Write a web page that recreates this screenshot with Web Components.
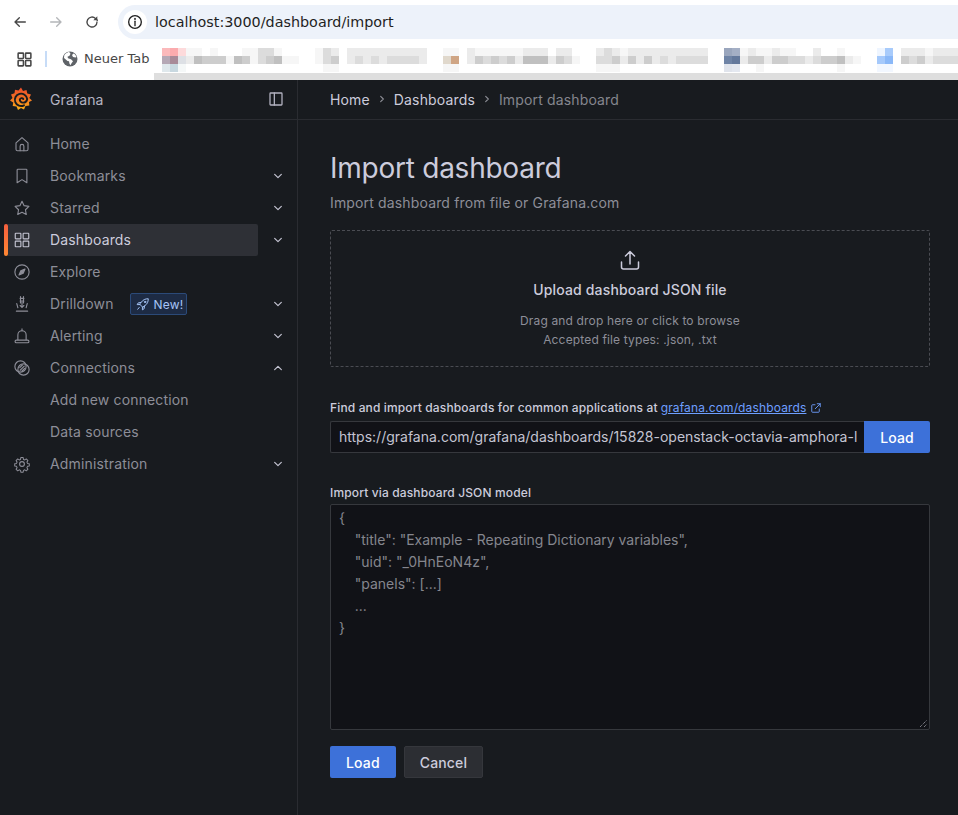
<!DOCTYPE html>
<html>
<head>
<meta charset="utf-8">
<title>Import dashboard</title>
<style>
  html, body { margin: 0; height: 100%; background: #181b1f; overflow: hidden; }
  body { width: 958px; height: 815px; display: flex; flex-direction: column; font-family: 'Inter', 'Liberation Sans', sans-serif; }
</style>
</head>
<body>
<browser-toolbar url="localhost:3000/dashboard/import"></browser-toolbar>
<bookmark-bar></bookmark-bar>
<grafana-app></grafana-app>

<script>
const ICONS = {
  home: '<path d="M4 10.5 12 3.5l8 7V19a2 2 0 0 1-2 2H6a2 2 0 0 1-2-2z"/><path d="M9.5 21v-6a2.5 2.5 0 0 1 5 0v6"/>',
  bookmark: '<path d="M6.5 3h11a1 1 0 0 1 1 1v17L12 16.8 5.5 21V4a1 1 0 0 1 1-1z"/>',
  star: '<path d="m12 3 2.8 5.9 6.4.9-4.6 4.5 1.1 6.4-5.7-3-5.7 3 1.1-6.4-4.6-4.5 6.4-.9z"/>',
  apps: '<rect x="3" y="3" width="7.5" height="7.5" rx=".8"/><rect x="13.5" y="3" width="7.5" height="7.5" rx=".8"/><rect x="3" y="13.5" width="7.5" height="7.5" rx=".8"/><rect x="13.5" y="13.5" width="7.5" height="7.5" rx=".8"/>',
  compass: '<circle cx="12" cy="12" r="9.5"/><path d="m16 8-2.4 5.6L8 16l2.4-5.6z" fill="currentColor"/>',
  drilldown: '<path d="M9.5 4.5h5M9.5 8h5M10 2v8.500M14 2v8.500"/><path d="M12 9v7.500M9.500 14l2.500 2.500 2.500-2.500"/><path d="M5 11.500 6.500 17M19 11.500 17.500 17M4.500 21.500h15"/>',
  bell: '<path d="M6.500 17v-6.500a5.500 5.500 0 0 1 11 0V17"/><path d="M4.500 17.500h15a.5.5 0 0 1 0 3.500h-15a.5.5 0 0 1 0-3.500zM12 2.500V5"/>',
  link: '<circle cx="10" cy="10" r="7.5"/><circle cx="14" cy="14" r="7.5"/><path d="m9.5 15 5.5-5.5M9 11.5l3.5-3.5M12 16l3.5-3.5"/>',
  cog: '<circle cx="12" cy="12" r="3.2"/><path d="M10.3 2.5h3.4l.5 2.7 1.9.8 2.3-1.5 2.4 2.4-1.5 2.3.8 1.9 2.7.5v3.4l-2.7.5-.8 1.9 1.5 2.3-2.4 2.4-2.3-1.5-1.9.8-.5 2.7h-3.4l-.5-2.7-1.9-.8-2.3 1.5-2.4-2.4 1.5-2.3-.8-1.9-2.7-.5v-3.4l2.7-.5.8-1.9-1.5-2.3 2.4-2.4 2.3 1.5 1.9-.8z" transform="translate(12 12) scale(.9) translate(-12 -12)"/>',
  down: '<path d="m7 9.5 5 5 5-5"/>',
  up: '<path d="m7 14.5 5-5 5 5"/>',
  right: '<path d="m10 8 4 4-4 4"/>',
  dock: '<rect x="3" y="3" width="18" height="18" rx="1"/><path d="M9.5 3v18"/>',
  upload: '<path d="M3.5 14v5a2 2 0 0 0 2 2h13a2 2 0 0 0 2-2v-5"/><path d="M12 16V3.5M7.5 8 12 3.5 16.5 8"/>',
  external: '<path d="M18.5 14v5a1.5 1.5 0 0 1-1.5 1.5H5A1.5 1.5 0 0 1 3.500 19V7A1.500 1.500 0 0 1 5 5.500h5"/><path d="M14.500 3.500h6v6M20.500 3.500 10.500 13.500"/>',
  rocket: '<path d="M9 9C12 4.500 16 3 21 3c0 5-1.500 9-6 12l-3.500 2.500-5-5z"/><circle cx="15.500" cy="8.500" r="1.300"/><path d="M8.500 9.500 4 10l-2 3h4.500M14.500 15.500 14 20l-3 2v-4.500M5.500 18 3 21"/>',
  back: '<path d="M20 12H5M11 5.500 4.500 12l6.500 6.500"/>',
  forward: '<path d="M4 12h15M13 5.500l6.500 6.500-6.500 6.500"/>',
  reload: '<path d="M19.500 12a7.500 7.500 0 1 1-2.300-5.400L20 9.300"/><path d="M20 3.500v6h-6z" fill="currentColor" stroke="none"/>',
  info: '<circle cx="12" cy="12" r="9.500"/><path d="M12 11v6.500"/><path d="M12 6.500v2"/>',
};

class GfIcon extends HTMLElement {
  connectedCallback() {
    const size = this.getAttribute('size') || 16;
    const stroke = this.getAttribute('stroke') || 1.7;
    this.attachShadow({ mode: 'open' }).innerHTML = `
      <style>:host { display: inline-flex; flex: none; width: ${size}px; height: ${size}px; } svg { display: block; }</style>
      <svg width="${size}" height="${size}" viewBox="0 0 24 24" fill="none" stroke="currentColor" stroke-width="${stroke}" stroke-linecap="round" stroke-linejoin="round">${ICONS[this.getAttribute('name')] || ''}</svg>`;
  }
}
customElements.define('gf-icon', GfIcon);

class BrowserToolbar extends HTMLElement {
  connectedCallback() {
    this.attachShadow({ mode: 'open' }).innerHTML = `
      <style>
        :host { display: flex; align-items: center; height: 44px; flex: none; background: #fff; box-sizing: border-box; padding: 0 0 0 12px; color: #474747; font-family: 'DejaVu Sans', sans-serif; }
        gf-icon.back { margin-right: 20px; }
        gf-icon.fwd { margin-right: 20px; color: #b4b6b9; }
        .pill { flex: 1; height: 34px; margin-left: 18px; background: #edf2fa; border-radius: 17px 0 0 17px; display: flex; align-items: center; padding-left: 5px; }
        .badge { width: 24px; height: 24px; border-radius: 50%; background: #fff; display: flex; align-items: center; justify-content: center; color: #1f1f1f; }
        .url { margin-left: 8px; font-size: 14.35px; color: #1f1f1f; white-space: nowrap; }
      </style>
      <gf-icon class="back" name="back" size="16" stroke="2"></gf-icon>
      <gf-icon class="fwd" name="forward" size="16" stroke="2"></gf-icon>
      <gf-icon name="reload" size="16" stroke="2"></gf-icon>
      <div class="pill">
        <div class="badge"><gf-icon name="info" size="16" stroke="2"></gf-icon></div>
        <div class="url">${this.getAttribute('url')}</div>
      </div>`;
  }
}
customElements.define('browser-toolbar', BrowserToolbar);

// pixelated bookmark titles: one char per 8px cell, ten cells per chunk
const MOSAIC_COLORS = {
  '.': '#fff', f: '#f6f6f6', e: '#ebebeb', d: '#dcdcdc', c: '#cdcdcd', b: '#c0c0c0',
  A: '#fbb9bb', B: '#fbabae', C: '#fddadb', D: '#b5a8b5', E: '#a88a98', F: '#dde0e5',
  G: '#dfe8ec', H: '#c8d8e0', I: '#f5f8f8', J: '#e0d8cc', K: '#cfa584', L: '#9aa6bd',
  M: '#a4afc5', N: '#6f84a6', O: '#64799c', P: '#e0e4ec', Q: '#e4e8f0', R: '#eef5ff',
  S: '#a8cbfb', T: '#a5c9fb', U: '#8ab8f8', V: '#f2f7ff',
};
const MOSAIC_ROWS = [
  ['ABCff.f...', 'ffddf....f', 'de.eeeeeee', 'eee..ff.ef', 'fffffeee.e', 'e...edefee', 'eeeeeeee..', 'LMfeffeff.', '.e..f....R', 'S.eeefeeee'],
  ['DEFebcccfb', 'cfdcbff..f', 'dc.edededd', 'dde..JK.ec', 'dcdcebbbec', 'df..ddcece', 'cededddd..', 'NOecceccdd', 'edccbef..T', 'U.cdcedddd'],
  ['GHI.......', '..........', 'ff........', '.....ff...', '..........', '....fff...', '..........', 'PQ..f.....', '....f....V', 'V.........'],
].map(chunks => chunks.join(''));

class BlurMosaic extends HTMLElement {
  connectedCallback() {
    const cells = MOSAIC_ROWS.map(row => [...row].map(ch => `<i style="background:${MOSAIC_COLORS[ch]}"></i>`).join('')).join('');
    this.attachShadow({ mode: 'open' }).innerHTML = `
      <style>
        :host { display: grid; grid-template-columns: repeat(100, 8.04px); grid-auto-rows: 8px; }
        i { display: block; }
      </style>${cells}`;
  }
}
customElements.define('blur-mosaic', BlurMosaic);

class BookmarkBar extends HTMLElement {
  connectedCallback() {
    this.attachShadow({ mode: 'open' }).innerHTML = `
      <style>
        :host { display: flex; height: 36px; flex: none; background: #fff; color: #474747; font-family: 'DejaVu Sans', sans-serif; overflow: hidden; }
        .apps { margin: 7px 0 0 16px; }
        .sep { width: 2px; height: 16px; margin: 7px 0 0 12px; background: #c7dcf7; }
        .globe { margin: 7px 0 0 15px; color: #5f6368; }
        .tab { margin: 6px 0 0 6px; font-size: 13px; line-height: 18px; width: 70px; white-space: nowrap; color: #474747; }
        .rest { flex: 1; display: flex; flex-direction: column; min-width: 0; }
        blur-mosaic { margin: 4px 0 0 8px; height: 25px; overflow: hidden; }
        .strip { height: 7px; background: #dedede; }
      </style>
      <gf-icon class="apps" name="apps" size="17" stroke="2.200"></gf-icon>
      <div class="sep"></div>
      <svg class="globe" width="16" height="16" viewBox="0 0 16 16"><circle cx="8" cy="8" r="7.500" fill="#5f6368"/><path d="M7 .8C5 1.500 3 3 2.200 4.500L2 7l3.500 3 1.500.3.500 2.500 1 1.500 1-2 1.500-2-2-2-3-1-.5-1.500 2-1 1-2zM11.500 2.500 10 4l1 2 2.500.5 1-.5c-.5-1.500-1.500-3-3-3.500z" fill="#fff"/></svg>
      <div class="tab">Neuer Tab</div>
      <div class="rest"><blur-mosaic></blur-mosaic><div class="strip"></div></div>`;
  }
}
customElements.define('bookmark-bar', BookmarkBar);

class NavItem extends HTMLElement {
  connectedCallback() {
    const icon = this.getAttribute('icon');
    const caret = this.getAttribute('caret');
    const active = this.hasAttribute('active');
    this.attachShadow({ mode: 'open' }).innerHTML = `
      <style>
        :host { display: flex; height: 32px; padding-left: 4px; font-size: 14px; letter-spacing: .15px; color: #8d8e98; }
        .link { width: 254px; box-sizing: border-box; display: flex; align-items: center; border-radius: 2px; }
        .bar { width: 4px; height: 32px; border-radius: 2px; background: ${active ? 'linear-gradient(#f55f3e,#ff8833)' : 'transparent'}; flex: none; }
        .icon { width: 42px; display: flex; justify-content: flex-start; padding-left: 5px; box-sizing: border-box; flex: none; color: ${active ? '#c4c4d2' : '#8d8e98'}; }
        .label { color: ${active ? '#ccccdc' : 'inherit'}; display: flex; align-items: center; gap: 16px; white-space: nowrap; padding-bottom: 2px; }
        .body { flex: 1; height: 32px; display: flex; align-items: center; background: ${active ? '#2e3036' : 'transparent'}; border-radius: 0 2px 2px 0; }
        .caret { width: 39px; display: flex; align-items: center; justify-content: center; color: #c4c4d2; }
      </style>
      <div class="link">
        <div class="bar"></div>
        <div class="body">
          <div class="icon">${icon ? `<gf-icon name="${icon}" size="18" stroke="1.500"></gf-icon>` : ''}</div>
          <div class="label"><slot></slot></div>
        </div>
      </div>
      <div class="caret">${caret ? `<gf-icon name="${caret}" size="16" stroke="1.800"></gf-icon>` : ''}</div>`;
  }
}
customElements.define('nav-item', NavItem);

class NewBadge extends HTMLElement {
  connectedCallback() {
    this.attachShadow({ mode: 'open' }).innerHTML = `
      <style>
        :host { display: inline-flex; align-items: center; gap: 4px; height: 22px; margin-top: 2px; box-sizing: border-box; padding: 0 3px 0 5px; background: #1d2b44; border: 1px solid #2b4a78; border-radius: 2px; color: #a6c5f7; font-size: 12px; letter-spacing: .15px; }
      </style>
      <gf-icon name="rocket" size="14" stroke="1.700"></gf-icon><slot></slot>`;
  }
}
customElements.define('new-badge', NewBadge);

class NavSidebar extends HTMLElement {
  connectedCallback() {
    this.attachShadow({ mode: 'open' }).innerHTML = `
      <style>
        :host { display: flex; flex-direction: column; width: 298px; flex: none; box-sizing: border-box; border-right: 1px solid #2a2c31; background: #181b1f; }
        .head { height: 40px; box-sizing: border-box; border-bottom: 1px solid #2a2c31; display: flex; align-items: center; padding: 0 13px 1px 10px; color: #b4b4c2; font-size: 14px; letter-spacing: .15px; }
        .head span { margin-left: 18px; flex: 1; }
        .head gf-icon { color: #b4b4c2; }
        nav { padding-top: 8px; display: flex; flex-direction: column; }
      </style>
      <div class="head">
        <svg width="22" height="24" viewBox="0 0 22 24">
          <defs><linearGradient id="g" x1="0" y1="1" x2="0" y2="0"><stop offset="0" stop-color="#fcb316"/><stop offset=".55" stop-color="#f26f23"/><stop offset="1" stop-color="#ee4d2b"/></linearGradient></defs>
          <path d="M11 .5 13 4l3.500-1 .8 3.500 3.700 1-1.700 3.500L22 13.500l-3 1.500.3 3.500-3.800.4-1.500 3.600-3-1.500-3 2-1.500-3.500-3.800-.5.500-3.500L0 13.500 2.500 11 1 7.500l3.500-1.300.5-3.500 3.500.8z" fill="url(#g)"/>
          <path d="M14 18.300a6.200 6.200 0 1 1 3.200-6.300 4.300 4.300 0 0 1-4.500 3.600A3 3 0 0 1 9.800 12.500c.4-1.600 2.700-1.900 3.500-.5" fill="none" stroke="#181b1f" stroke-width="1.900" stroke-linecap="round"/>
        </svg>
        <span>Grafana</span>
        <gf-icon name="dock" size="16" stroke="1.900"></gf-icon>
      </div>
      <nav>
        <nav-item icon="home">Home</nav-item>
        <nav-item icon="bookmark" caret="down">Bookmarks</nav-item>
        <nav-item icon="star" caret="down">Starred</nav-item>
        <nav-item icon="apps" caret="down" active>Dashboards</nav-item>
        <nav-item icon="compass">Explore</nav-item>
        <nav-item icon="drilldown" caret="down">Drilldown <new-badge>New!</new-badge></nav-item>
        <nav-item icon="bell" caret="down">Alerting</nav-item>
        <nav-item icon="link" caret="up">Connections</nav-item>
        <nav-item>Add new connection</nav-item>
        <nav-item>Data sources</nav-item>
        <nav-item icon="cog" caret="down">Administration</nav-item>
      </nav>`;
  }
}
customElements.define('nav-sidebar', NavSidebar);

class BreadCrumbs extends HTMLElement {
  connectedCallback() {
    this.attachShadow({ mode: 'open' }).innerHTML = `
      <style>
        :host { display: flex; align-items: center; height: 40px; box-sizing: border-box; border-bottom: 1px solid #2a2c31; padding: 0 0 1px 32px; font-size: 14px; letter-spacing: .15px; color: #ccccdc; }
        gf-icon { margin: 0 4px; color: #8f9098; }
        .cur { color: #85868e; }
      </style>
      <span>Home</span><gf-icon name="right" size="16" stroke="1.600"></gf-icon>
      <span>Dashboards</span><gf-icon name="right" size="16" stroke="1.600"></gf-icon>
      <span class="cur">Import dashboard</span>`;
  }
}
customElements.define('bread-crumbs', BreadCrumbs);

class GfButton extends HTMLElement {
  connectedCallback() {
    const secondary = this.getAttribute('variant') === 'secondary';
    this.attachShadow({ mode: 'open' }).innerHTML = `
      <style>
        :host { display: inline-flex; align-items: center; justify-content: center; height: 32px; box-sizing: border-box; padding: 0 ${secondary ? 15 : 16}px; border-radius: 2px; font-size: 14px; font-weight: 500; letter-spacing: .15px;
          background: ${secondary ? '#2c2e33' : '#3d71d9'}; color: ${secondary ? '#ccccdc' : '#fff'}; border: ${secondary ? '1px solid #35373c' : '0'}; }
      </style><slot></slot>`;
  }
}
customElements.define('gf-button', GfButton);

class DropZone extends HTMLElement {
  connectedCallback() {
    this.attachShadow({ mode: 'open' }).innerHTML = `
      <style>
        :host { display: flex; flex-direction: column; align-items: center; height: 137px; box-sizing: border-box; border: 1px dashed #4a4c52; border-radius: 2px; padding-top: 17px; }
        gf-icon { color: #ccccdc; }
        .title { margin-top: 7px; font-size: 14px; line-height: 22px; font-weight: 500; letter-spacing: .15px; color: #ccccdc; }
        .hint { margin-top: 10px; font-size: 12px; line-height: 19px; text-align: center; color: #8d8e98; letter-spacing: .15px; }
      </style>
      <gf-icon name="upload" size="24" stroke="1.500"></gf-icon>
      <div class="title">Upload dashboard JSON file</div>
      <div class="hint"><slot></slot></div>`;
  }
}
customElements.define('drop-zone', DropZone);

class ImportPage extends HTMLElement {
  connectedCallback() {
    this.attachShadow({ mode: 'open' }).innerHTML = `
      <style>
        :host { display: block; flex: 1; min-width: 0; padding: 0 28px 0 32px; color: #ccccdc; }
        h1 { margin: 32px 0 0; font-size: 28px; line-height: 32px; font-weight: 400; letter-spacing: -.25px; color: #ccccdc; }
        .sub { margin-top: 8px; font-size: 14px; line-height: 21px; letter-spacing: .15px; color: #8d8e98; }
        drop-zone { margin-top: 17px; }
        label { display: block; font-size: 12px; line-height: 16px; font-weight: 500; letter-spacing: .14px; color: #ccccdc; }
        .url-label { margin-top: 33px; margin-bottom: 5px; display: flex; align-items: center; }
        a { color: #6e9fff; text-decoration: underline; margin-left: 3px; font-weight: 400; }
        .url-label gf-icon { color: #6e9fff; margin-left: 4px; }
        .row { display: flex; height: 32px; }
        .input { flex: 1; min-width: 0; box-sizing: border-box; background: #111217; border: 1px solid #36383d; border-right: 0; border-radius: 2px 0 0 2px; padding: 0 0 0 8px; font-size: 14px; line-height: 30px; color: #c4c4d2; white-space: nowrap; }
        .row gf-button { border-radius: 0 2px 2px 0; width: 66px; padding: 0; flex: none; }
        .json-label { margin-top: 32px; margin-bottom: 3px; }
        .area { position: relative; height: 226px; box-sizing: border-box; background: #111217; border: 1px solid #36383d; border-radius: 2px; padding: 2px 8px; font-size: 14px; line-height: 22px; color: #85868e; white-space: pre; }
        .grip { position: absolute; right: 1px; bottom: 1px; display: block; }
        .actions { display: flex; gap: 8px; margin-top: 16px; }
      </style>
      <h1>Import dashboard</h1>
      <div class="sub">Import dashboard from file or Grafana.com</div>
      <drop-zone>Drag and drop here or click to browse<br>Accepted file types: .json, .txt</drop-zone>
      <label class="url-label">Find and import dashboards for common applications at <a>grafana.com/dashboards</a><gf-icon name="external" size="12" stroke="1.800"></gf-icon></label>
      <div class="row">
        <div class="input">https://grafana.com/grafana/dashboards/15828-openstack-octavia-amphora-l</div>
        <gf-button>Load</gf-button>
      </div>
      <label class="json-label">Import via dashboard JSON model</label>
      <div class="area">{
    "title": "Example - Repeating Dictionary variables",
    "uid": "_0HnEoN4z",
    "panels": [...]
    ...
}<svg class="grip" width="9" height="9" viewBox="0 0 9 9" stroke="#a8a8b0" stroke-width="1" stroke-dasharray="1 1"><path d="M1 8 8 1M5 8 8 5"/></svg></div>
      <div class="actions"><gf-button>Load</gf-button><gf-button variant="secondary">Cancel</gf-button></div>`;
  }
}
customElements.define('import-page', ImportPage);

class GrafanaApp extends HTMLElement {
  connectedCallback() {
    this.attachShadow({ mode: 'open' }).innerHTML = `
      <style>
        :host { display: flex; flex: 1; min-height: 0; background: #181b1f; }
        .main { flex: 1; min-width: 0; display: flex; flex-direction: column; }
      </style>
      <nav-sidebar></nav-sidebar>
      <div class="main"><bread-crumbs></bread-crumbs><import-page></import-page></div>`;
  }
}
customElements.define('grafana-app', GrafanaApp);
</script>
</body>
</html>
